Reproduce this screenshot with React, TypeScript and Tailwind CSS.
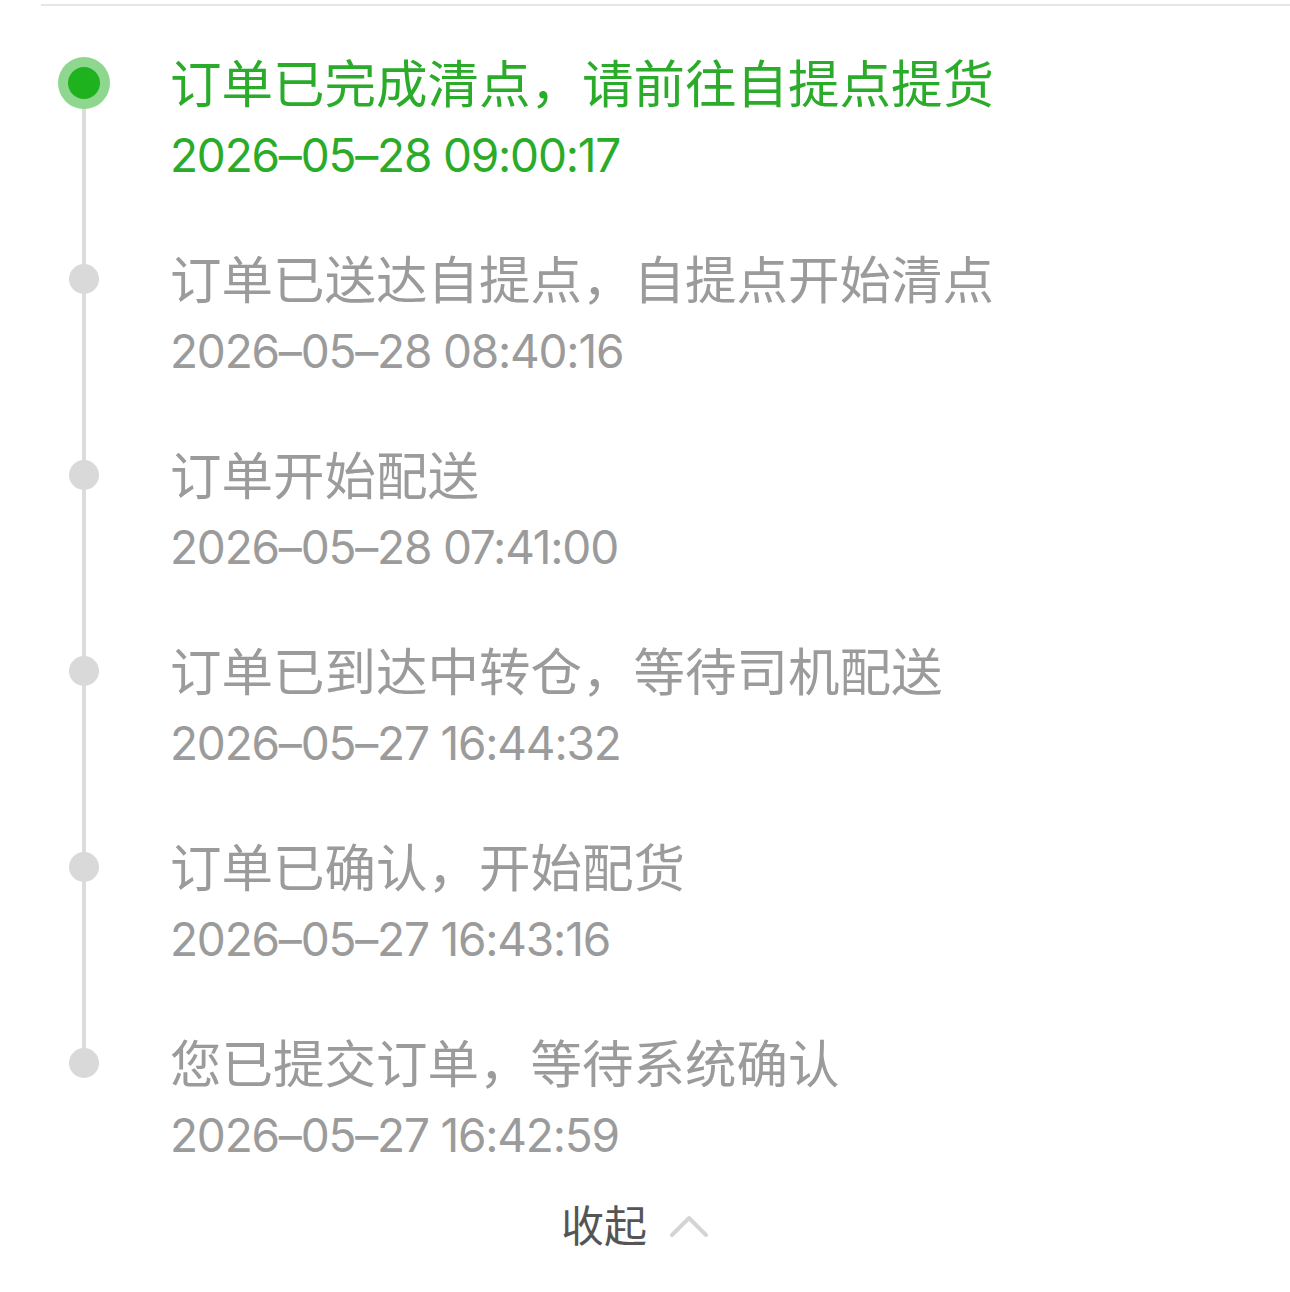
import React from 'react';

type Step = { title: string; time: string };

const steps: Step[] = [
  { title: '订单已完成清点，请前往自提点提货', time: '2026-05-28 09:00:17' },
  { title: '订单已送达自提点，自提点开始清点', time: '2026-05-28 08:40:16' },
  { title: '订单开始配送', time: '2026-05-28 07:41:00' },
  { title: '订单已到达中转仓，等待司机配送', time: '2026-05-27 16:44:32' },
  { title: '订单已确认，开始配货', time: '2026-05-27 16:43:16' },
  { title: '您已提交订单，等待系统确认', time: '2026-05-27 16:42:59' },
];

const font = { fontFamily: '"Noto Sans", "Noto Sans CJK SC", sans-serif' };
const timeFont = { fontFamily: 'Inter, "Noto Sans", sans-serif' };

const StepRow: React.FC<{ step: Step; index: number; total: number }> = ({ step, index, total }) => {
  const current = index === 0;
  const last = index === total - 1;
  const tone = current ? 'text-[#2aab2a]' : 'text-[#9b9b9b]';

  return (
    <div className="flex">
      {/* rail: segment above, dot, segment below */}
      <div className="w-[170px] shrink-0 pl-[64px]">
        <div className="w-[40px] h-full flex flex-col items-center">
          <div className={`w-[4px] h-[36px] shrink-0 ${index === 0 ? 'bg-transparent' : 'bg-[#dcdcdc]'}`} />
          <div className="h-0 w-full flex items-center justify-center relative z-10">
            {current ? (
              <div className="w-[52px] h-[52px] shrink-0 rounded-full bg-[#8fd78f] flex items-center justify-center">
                <div className="w-[32px] h-[32px] rounded-full bg-[#1fb21f]" />
              </div>
            ) : (
              <div className="w-[30px] h-[30px] shrink-0 rounded-full bg-[#d9d9d9]" />
            )}
          </div>
          <div className={`w-[4px] flex-1 ${last ? 'bg-transparent' : 'bg-[#dcdcdc]'}`} />
        </div>
      </div>
      <div className={last ? '' : 'pb-[52px]'}>
        <div className={`text-[51.5px] leading-[72px] whitespace-nowrap ${tone}`}>{step.title}</div>
        <div className={`text-[46px] leading-[72px] tracking-[-1.2px] whitespace-nowrap ${tone}`} style={timeFont}>
          {step.time.replace(/-/g, '–')}
        </div>
      </div>
    </div>
  );
};

export default function App() {
  return (
    <div className="bg-white w-[1290px] min-h-[1292px]" style={font}>
      <div className="pt-[4px]">
        <div className="ml-[41px] h-[2px] bg-[#e6e6e6]" />
      </div>
      <div className="pt-[41px]">
        {steps.map((s, i) => (
          <StepRow key={s.time} step={s} index={i} total={steps.length} />
        ))}
      </div>
      <div className="flex items-center justify-center gap-[22px] pt-[25px] pr-[20px]">
        <span className="text-[43px] leading-[60px] text-[#555555]">收起</span>
        <svg width="40" height="24" viewBox="0 0 40 24" fill="none">
          <path d="M3 21 L20 4 L37 21" stroke="#d4d4d4" strokeWidth="4" strokeLinecap="round" strokeLinejoin="round" />
        </svg>
      </div>
    </div>
  );
}
